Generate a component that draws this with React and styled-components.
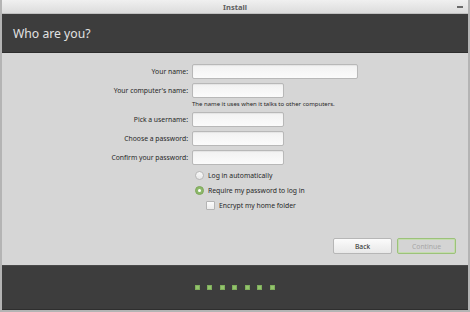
import React, { useState } from 'react';
import styled, { createGlobalStyle } from 'styled-components';

const GlobalStyle = createGlobalStyle`
  html, body {
    margin: 0;
    padding: 0;
    background: #8a8a8a;
  }
  * {
    box-sizing: border-box;
  }
`;

const Window = styled.div`
  width: 470px;
  height: 312px;
  display: flex;
  flex-direction: column;
  background: #d6d6d6;
  border: 2px solid #b4b4b4;
  border-top: none;
  font-family: "Noto Sans", "Open Sans", sans-serif;
  color: #262626;
  overflow: hidden;
`;

const TitleBar = styled.div`
  height: 14px;
  margin: 0 -2px;
  display: flex;
  align-items: center;
  justify-content: center;
  position: relative;
  background: linear-gradient(#f0f0f0, #dcdcdc);
  border-bottom: 1px solid #c0c0c0;
  font-size: 7.5px;
  font-weight: bold;
  color: #5e5e5e;
`;

const Minimize = styled.span`
  position: absolute;
  right: 7px;
  top: 6px;
  width: 6px;
  height: 2px;
  background: #6a6a6a;
`;

const Header = styled.div`
  height: 39px;
  background: #3d3d3d;
  border-bottom: 1px solid #2e2e2e;
  display: flex;
  align-items: center;
  padding-left: 11px;
  font-size: 12.2px;
  color: #e2e2e2;
`;

const Body = styled.div`
  flex: 1;
  display: flex;
  flex-direction: column;
  padding-top: 11px;
`;

const Form = styled.div`
  display: grid;
  grid-template-columns: 186px auto;
  column-gap: 4px;
  row-gap: 4px;
  align-items: center;
`;

const Label = styled.label`
  text-align: right;
  font-size: 6.8px;
  line-height: 15px;
  color: #262626;
`;

const Field = styled.div`
  display: flex;
  height: 15px;
`;

const Input = styled.input`
  width: ${p => p.$wide ? 166 : 92}px;
  height: 15px;
  margin: 0;
  padding: 0 3px;
  border: 1px solid #b8b8b8;
  border-radius: 2px;
  background: linear-gradient(#f2f2f2, #fbfbfb);
  box-shadow: inset 0 1px 1px rgba(0, 0, 0, 0.06);
  font-family: inherit;
  font-size: 8px;
  outline: none;
`;

const Hint = styled.div`
  grid-column: 2;
  margin-top: -2px;
  height: 8px;
  line-height: 8px;
  font-size: 6px;
  color: #262626;
`;

const Options = styled.div`
  display: flex;
  flex-direction: column;
  gap: 6px;
  margin-top: 6px;
  padding-left: 193px;
`;

const Option = styled.label`
  display: flex;
  align-items: center;
  gap: 4px;
  height: 9px;
  margin-left: ${p => p.$indent || 0}px;
  font-size: 6.8px;
  color: #262626;
`;

const Radio = styled.span`
  width: 9px;
  height: 9px;
  border-radius: 50%;
  border: 1px solid ${p => p.$on ? '#7fa85a' : '#b8b8b8'};
  background: ${p => p.$on ? '#8cb86a' : 'linear-gradient(#f8f8f8, #e8e8e8)'};
  display: flex;
  align-items: center;
  justify-content: center;

  &::after {
    content: '';
    width: 3px;
    height: 3px;
    border-radius: 50%;
    background: ${p => p.$on ? '#ffffff' : 'transparent'};
  }
`;

const Check = styled.span`
  width: 9px;
  height: 9px;
  border-radius: 1px;
  border: 1px solid #b4b4b4;
  background: linear-gradient(#fbfbfb, #ececec);
`;

const Buttons = styled.div`
  margin-top: auto;
  margin-bottom: 11px;
  display: flex;
  justify-content: flex-end;
  gap: 5px;
  padding-right: 12px;
`;

const Button = styled.button`
  width: 59px;
  height: 16px;
  margin: 0;
  padding: 0;
  border: 1px solid ${p => p.$primary ? '#9cc27a' : '#b6b6b6'};
  border-radius: 2px;
  background: ${p => p.$primary ? '#d4d4d4' : 'linear-gradient(#fbfbfb, #e8e8e8)'};
  font-family: inherit;
  font-size: 6.8px;
  color: ${p => p.$primary ? '#a6a6a6' : '#262626'};
  box-shadow: ${p => p.$primary ? 'inset 0 0 0 1px #c4dcae' : 'none'};
`;

const Footer = styled.div`
  height: 45px;
  background: #3d3d3d;
  border-top: 1px solid #4a4a4a;
  border-bottom: 1px solid #2e2e2e;
  display: flex;
  align-items: center;
  justify-content: center;
  gap: 7.5px;
  padding-right: 1px;
`;

const Dot = styled.span`
  width: 5px;
  height: 5px;
  border-radius: 1px;
  background: #93c46c;
  box-shadow: inset 0 0 0 1px #7fae5c;
`;

const fields = [
  { label: 'Your name:', wide: true },
  { label: "Your computer's name:", hint: 'The name it uses when it talks to other computers.' },
  { label: 'Pick a username:' },
  { label: 'Choose a password:', type: 'password' },
  { label: 'Confirm your password:', type: 'password' },
];

export default function App() {
  const [login, setLogin] = useState('password');

  return (
    <>
      <GlobalStyle />
      <Window>
        <TitleBar>
          Install
          <Minimize />
        </TitleBar>
        <Header>Who are you?</Header>
        <Body>
          <Form>
            {fields.map((f) => (
              <React.Fragment key={f.label}>
                <Label>{f.label}</Label>
                <Field>
                  <Input $wide={f.wide} type={f.type || 'text'} />
                </Field>
                {f.hint && <Hint>{f.hint}</Hint>}
              </React.Fragment>
            ))}
          </Form>
          <Options>
            <Option onClick={() => setLogin('auto')}>
              <Radio $on={login === 'auto'} />
              Log in automatically
            </Option>
            <Option onClick={() => setLogin('password')}>
              <Radio $on={login === 'password'} />
              Require my password to log in
            </Option>
            <Option $indent={11}>
              <Check />
              Encrypt my home folder
            </Option>
          </Options>
          <Buttons>
            <Button>Back</Button>
            <Button $primary>Continue</Button>
          </Buttons>
        </Body>
        <Footer>
          {Array.from({ length: 7 }).map((_, i) => <Dot key={i} />)}
        </Footer>
      </Window>
    </>
  );
}
